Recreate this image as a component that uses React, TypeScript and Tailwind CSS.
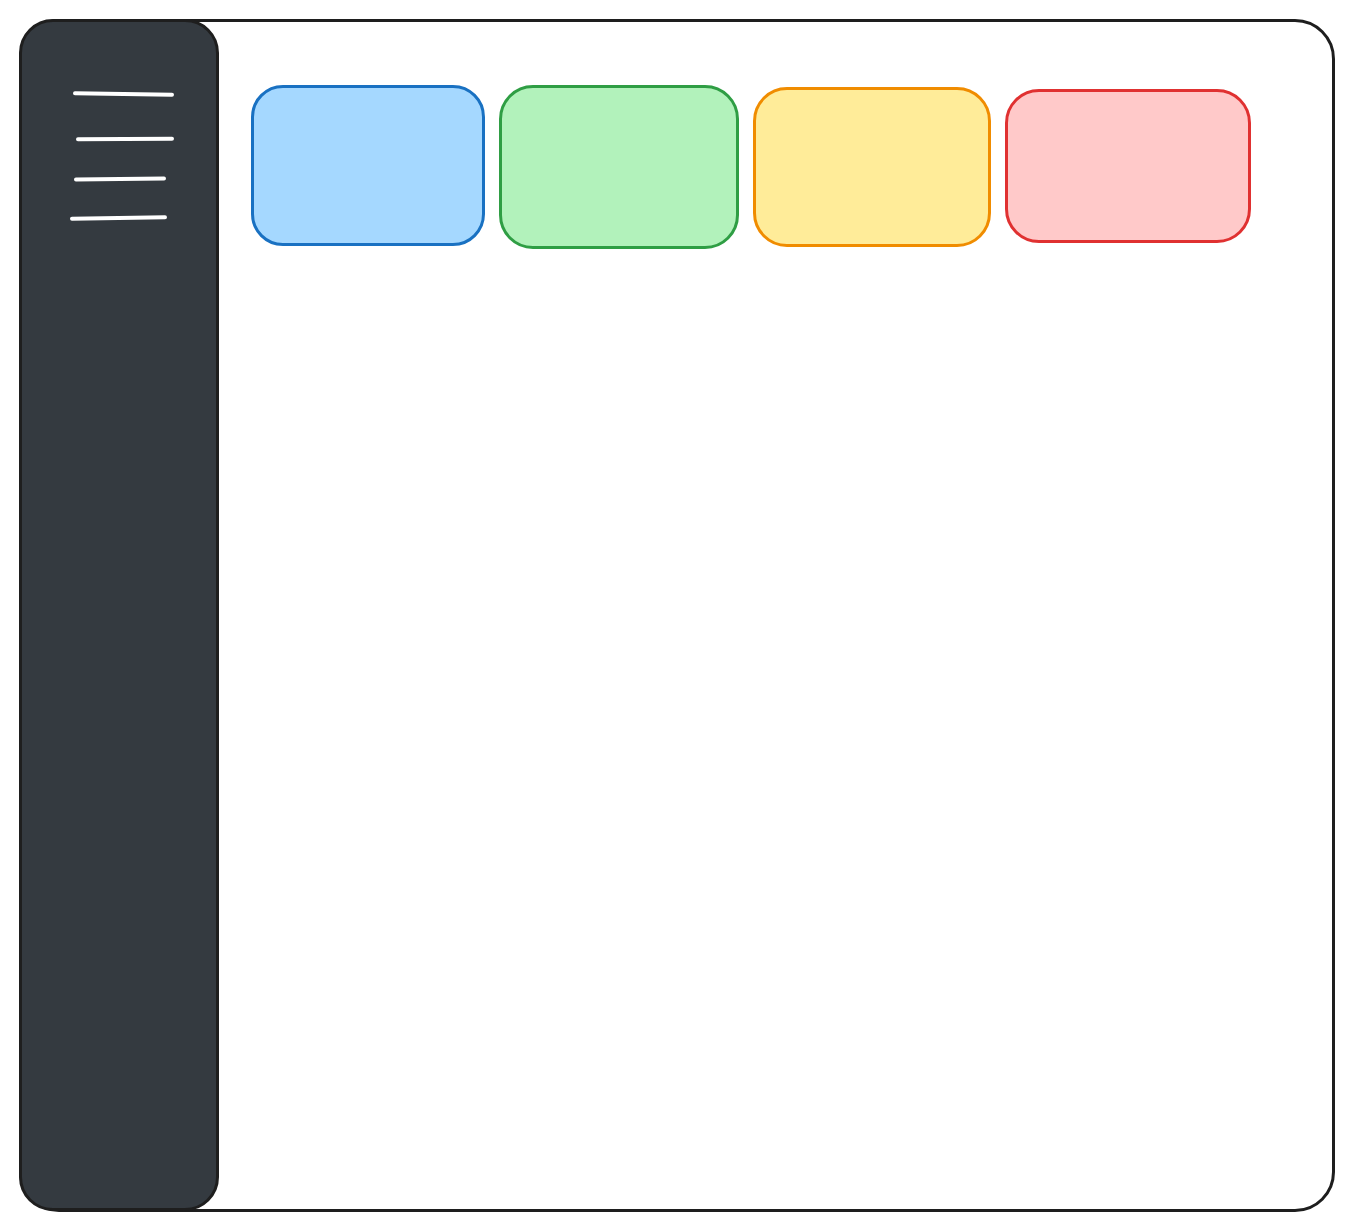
const cards = [
  { name: 'blue', cls: 'w-[234px] h-[161px] mt-[63px] bg-[#a5d8ff] border-[#1971c2] rounded-[32px]' },
  { name: 'green', cls: 'w-[240px] h-[164px] mt-[63px] bg-[#b2f2bb] border-[#2f9e44] rounded-[34px]' },
  { name: 'yellow', cls: 'w-[238px] h-[160px] mt-[65px] bg-[#ffec99] border-[#f08c00] rounded-[34px]' },
  { name: 'red', cls: 'w-[246px] h-[154px] mt-[67px] bg-[#ffc9c9] border-[#e03131] rounded-[34px]' },
];

export default function App() {
  return (
    <div className="w-[1353px] h-[1231px] bg-white pt-[19px] pl-[19px] font-['Liberation_Sans',sans-serif]">
      <div className="flex w-[1316px] h-[1193px] border-[3px] border-[#1e1e1e] rounded-[40px] bg-white">
        {/* sidebar */}
        <aside className="-ml-[3px] -mt-[3px] -mb-[2px] w-[200px] shrink-0 bg-[#343a40] border-[3px] border-[#1e1e1e] rounded-[34px] flex flex-col">
          <div className="mt-[70px] ml-[51px] w-[101px] h-[4px] rounded-full bg-white rotate-[0.8deg]" />
          <div className="mt-[41px] ml-[54px] w-[98px] h-[4px] rounded-full bg-white -rotate-[0.3deg]" />
          <div className="mt-[36px] ml-[52px] w-[92px] h-[4px] rounded-full bg-white -rotate-[0.6deg]" />
          <div className="mt-[35px] ml-[48px] w-[97px] h-[4px] rounded-full bg-white -rotate-[0.8deg]" />
        </aside>

        <main className="flex items-start gap-[14px] pl-[32px]">
          {cards.map((c) => (
            <div key={c.name} className={`border-[3.5px] ${c.cls}`} />
          ))}
        </main>
      </div>
    </div>
  );
}
